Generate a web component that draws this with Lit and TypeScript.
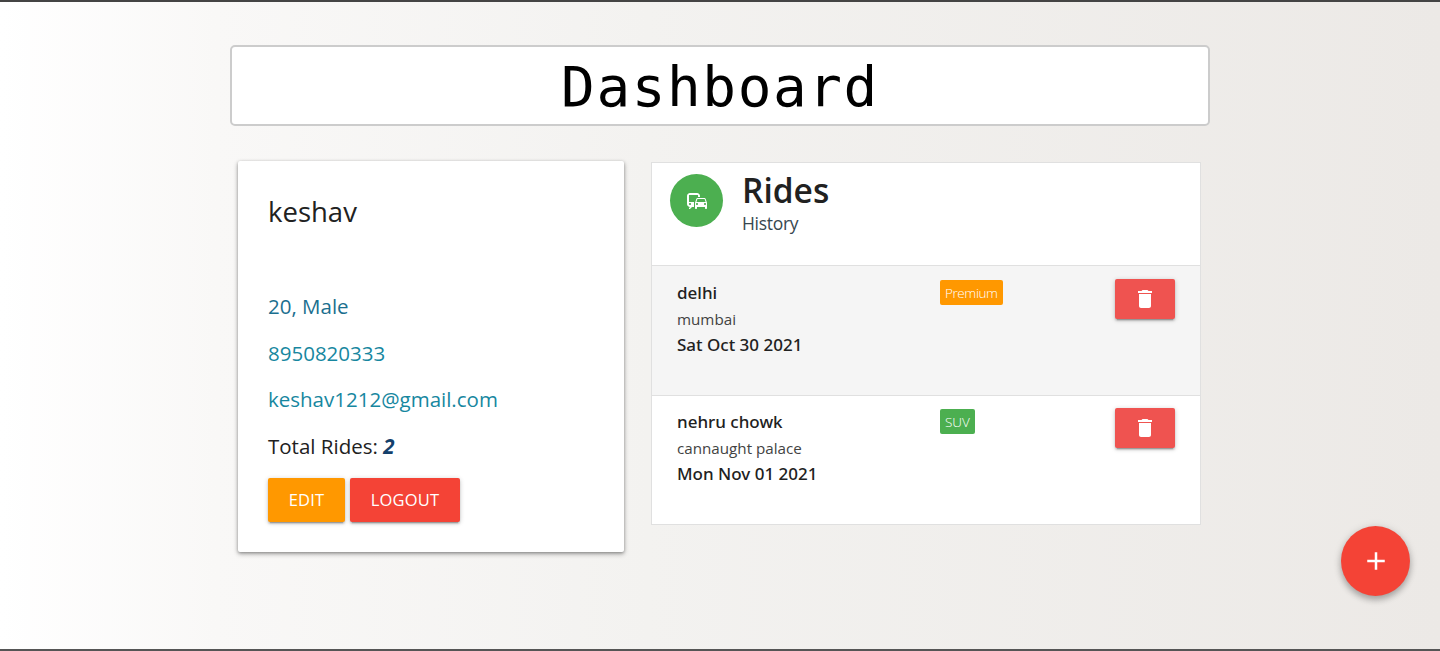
import { LitElement, html, css } from "lit";
import { customElement } from "lit/decorators.js";

const trash = html`<svg viewBox="0 0 24 24" width="24" height="24"><path fill="#fff" d="M6 19c0 1.1.9 2 2 2h8c1.1 0 2-.9 2-2V7H6v12zM19 4h-3.5l-1-1h-5l-1 1H5v2h14V4z"/></svg>`;

@customElement("app-root")
export class AppRoot extends LitElement {
  static styles = css`
    :host { display: block; font-family: "Open Sans", "Noto Sans", sans-serif; color: #212121; }
    * { box-sizing: border-box; }
    .page {
      position: relative; height: 651px; overflow: hidden;
      background: linear-gradient(to right, #ffffff 0%, #f9f8f7 15%, #f3f2f0 45%, #ece9e6 100%);
      border-top: 2px solid #444; border-bottom: 2px solid #555;
      padding-top: 43px;
    }
    .wrap { width: 980px; margin: 0 auto; }
    .title {
      height: 81px; border: 2px solid #ccc; border-radius: 5px; background: #fff; padding-top: 2px;
      display: flex; align-items: center; justify-content: center;
      font-family: "DejaVu Sans Mono", monospace; font-size: 56px; letter-spacing: 1.6px; color: #000;
    }
    .cols { display: flex; align-items: flex-start; padding: 35px 9px 0 8px; gap: 27px; }
    .profile {
      width: 386px; height: 391px; background: #fff; border-radius: 2px; padding: 30px;
      box-shadow: 0 2px 5px rgba(0,0,0,.3), 0 1px 3px rgba(0,0,0,.25);
      display: flex; flex-direction: column;
    }
    .name { font-size: 27.5px; line-height: 42px; margin-bottom: 58px; color: #212121; }
    .line { font-size: 20.5px; line-height: 30px; margin-bottom: 16.67px; }
    .age { color: #1b6f8f; }
    .teal { color: #17879f; }
    .total { color: #212121; }
    .total b { color: #14406b; font-style: italic; }
    .btns { display: flex; gap: 5px; }
    .btn {
      height: 44.5px; display: flex; align-items: center; justify-content: center;
      color: #fff; font-size: 16.5px; border-radius: 2px; letter-spacing: 0.2px;
      box-shadow: 0 2px 2px rgba(0,0,0,.14), 0 3px 1px -2px rgba(0,0,0,.2), 0 1px 5px rgba(0,0,0,.2);
    }
    .edit { background: #ff9800; width: 77px; }
    .logout { background: #f44336; width: 110px; }
    .rides { width: 550px; height: 363px; background: #fff; border: 1px solid #e0e0e0; margin-top: 1px; }
    .head { height: 102px; display: flex; padding: 11px 18px; gap: 19px; }
    .avatar { width: 53px; height: 53px; border-radius: 50%; background: #4caf50; display: flex; align-items: center; justify-content: center; }
    .avatar svg { display: block; }
    .rt { font-size: 33.5px; line-height: 32px; font-weight: 600; }
    .rs { font-size: 17.5px; line-height: 24px; margin-top: 4.5px; letter-spacing: -0.3px; color: #37474f; }
    .item { height: 130px; border-top: 1px solid #e0e0e0; padding: 13px 25px; display: flex; position: relative; }
    .item.grey { background: #f5f5f5; }
    .item + .item { height: 128px; padding-top: 12px; }
    .item + .item .del { top: 12px; }
    .info { width: 263px; }
    .from { font-family: "Noto Sans", "Open Sans", sans-serif; font-size: 17px; line-height: 28px; font-weight: 500; }
    .to { font-size: 15.2px; line-height: 24px; color: #424242; }
    .date { font-family: "Noto Sans", "Open Sans", sans-serif; font-size: 17px; line-height: 28px; font-weight: 500; }
    .badge { height: 25px; border-radius: 2px; color: #fff; font-size: 13.5px; font-weight: 300; padding: 0 5px; display: flex; align-items: center; margin-top: 1px; }
    .orange { background: #ff9800; letter-spacing: -0.4px; }
    .green { background: #4caf50; }
    .del {
      position: absolute; top: 13px; right: 25px; width: 60px; height: 40px; background: #ef5350; border-radius: 2px;
      display: flex; align-items: center; justify-content: center;
      box-shadow: 0 2px 2px rgba(0,0,0,.14), 0 3px 1px -2px rgba(0,0,0,.2), 0 1px 5px rgba(0,0,0,.2);
    }
    .fab {
      position: absolute; left: 1341px; top: 524px; width: 69px; height: 70px; border-radius: 50%; background: #f44336;
      display: flex; align-items: center; justify-content: center;
      box-shadow: 0 4px 6px rgba(0,0,0,.25), 0 1px 10px rgba(0,0,0,.12);
    }
  `;

  private ride(from: string, to: string, date: string, badge: string, cls: string, grey: boolean) {
    return html`<div class="item ${grey ? "grey" : ""}">
      <div class="info">
        <div class="from">${from}</div>
        <div class="to">${to}</div>
        <div class="date">${date}</div>
      </div>
      <div><div class="badge ${cls}">${badge}</div></div>
      <div class="del">${trash}</div>
    </div>`;
  }

  render() {
    return html`<div class="page">
      <div class="wrap">
        <div class="title">Dashboard</div>
        <div class="cols">
          <div class="profile">
            <div class="name">keshav</div>
            <div class="line age">20, Male</div>
            <div class="line teal">8950820333</div>
            <div class="line teal">keshav1212@gmail.com</div>
            <div class="line total">Total Rides: <b>2</b></div>
            <div class="btns">
              <div class="btn edit">EDIT</div>
              <div class="btn logout">LOGOUT</div>
            </div>
          </div>
          <div class="rides">
            <div class="head">
              <div class="avatar">
                <svg viewBox="0 0 24 24" width="24" height="24"><path fill="#fff" d="M12 4H5C3.34 4 2 5.34 2 7v8c0 1.66 1.34 3 3 3l-1 1v1h1l2-2.03L9 18v-5H4V5.98L13 6v2h2V7c0-1.66-1.34-3-3-3zM5 14c.55 0 1 .45 1 1s-.45 1-1 1-1-.45-1-1 .45-1 1-1zm15.57-4.34c-.14-.4-.52-.66-.97-.66h-7.19c-.46 0-.83.26-.98.66L10 13.77l.01 5.51c0 .38.31.72.69.72h.62c.38 0 .68-.38.68-.76V18h8v1.24c0 .38.31.76.69.76h.61c.38 0 .69-.34.69-.72l.01-1.37v-4.14l-1.43-4.07zm-8.16.34h7.19l1.03 3h-9.25l1.03-3zM12 16c-.55 0-1-.45-1-1s.45-1 1-1 1 .45 1 1-.45 1-1 1zm8 0c-.55 0-1-.45-1-1s.45-1 1-1 1 .45 1 1-.45 1-1 1z"/></svg>
              </div>
              <div>
                <div class="rt">Rides</div>
                <div class="rs">History</div>
              </div>
            </div>
            ${this.ride("delhi", "mumbai", "Sat Oct 30 2021", "Premium", "orange", true)}
            ${this.ride("nehru chowk", "cannaught palace", "Mon Nov 01 2021", "SUV", "green", false)}
          </div>
        </div>
      </div>
      <div class="fab"><svg viewBox="0 0 24 24" width="30" height="30"><path fill="#fff" d="M19 13h-6v6h-2v-6H5v-2h6V5h2v6h6v2z"/></svg></div>
    </div>`;
  }
}
